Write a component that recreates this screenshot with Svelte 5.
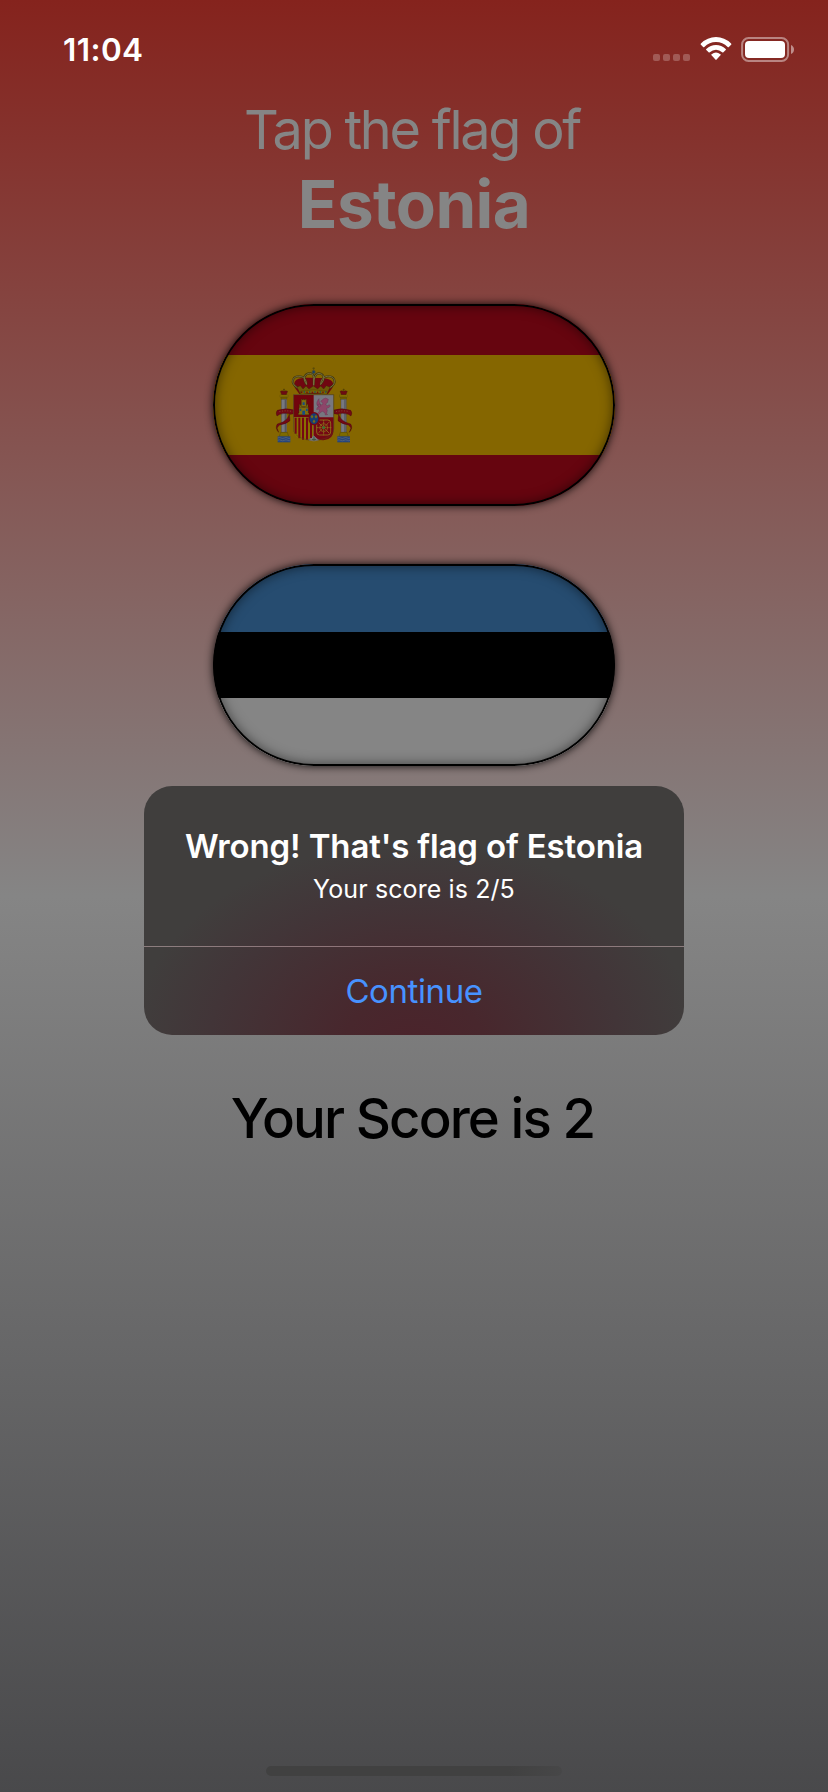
<script>
  const signal = [0, 1, 2, 3];
  const gems = [110, 118, 126, 134, 142, 150, 158, 166, 174, 182];
  const chains = [0, 45, 90, 135];
</script>

{#snippet pillar(x)}
  <g transform={`translate(${x} 0)`}>
    <path d="M-11 94 q5 -4 11 0 q6 -4 11 0 l-4 10 h-14z" fill="#6d0b12" stroke="#3b2b04" />
    <path d="M0 86v8M-3 89h6" stroke="#4b3b08" stroke-width="2" />
    <rect x="-12" y="105" width="24" height="6" fill="#8a7400" stroke="#40370a" stroke-width=".7" />
    <rect x="-9" y="111" width="18" height="7" fill="#6d5b00" stroke="#40370a" stroke-width=".7" />
    <rect x="-8" y="118" width="16" height="99" fill="#777880" stroke="#3f4148" />
    <path d="M4 118v99" stroke="#54565e" stroke-width="4" />
    <path d="M-10 217h20l4 12h-28z" fill="#7d6a00" stroke="#40370a" />
    <rect x="-19" y="229" width="38" height="18" fill="#27457a" />
    <path d="M-19 234q5 -3 10 0t10 0t10 0t8 0M-19 241q5 -3 10 0t10 0t10 0t8 0" fill="none" stroke="#71767b" stroke-width="1.5" />
  </g>
{/snippet}

{#snippet arms()}
  <svg class="arms" viewBox="0 0 300 270">
    {@render pillar(57)}
    {@render pillar(236)}
    <g fill="#730914" stroke="#35040a" stroke-width="1">
      <path d="M87 150q-25 -8 -50 1q-6 8 -1 17l8 -5q18 -6 32 0l11 -2z" />
      <path d="M73 163l2 19q-13 11 -32 13l-7 9l5 13q-12 -13 -4 -25q20 -4 31 -18z" />
      <path d="M207 150q25 -8 50 1q6 8 1 17l-8 -5q-18 -6 -32 0l-11 -2z" />
      <path d="M221 163l-2 19q13 11 32 13l7 9l-5 13q12 -13 4 -25q-20 -4 -31 -18z" />
    </g>
    <g fill="none" stroke="#8a6a3c" stroke-width="2" stroke-dasharray="3 5">
      <path d="M43 155q20 -5 40 0M213 155q20 -5 40 0" />
    </g>
    <path d="M90 84c-10 -28 14 -32 56 -30c44 -2 66 4 56 30l-13 18h-86z" fill="#700711" />
    <g fill="none" stroke="#40380c" stroke-width="6">
      <path d="M99 84C71 69 84 43 110 50q13 4 15 23M193 84c28 -15 15 -41 -11 -34q-13 4 -15 23" />
      <path d="M125 74c-15 -21 -4 -33 9 -34q12 0 12 12V76q0 -36 16 -36c15 2 21 16 4 34" />
    </g>
    <g fill="none" stroke="#7c7344" stroke-width="2.6">
      <path d="M99 84C71 69 84 43 110 50q13 4 15 23M193 84c28 -15 15 -41 -11 -34q-13 4 -15 23" />
      <path d="M125 74c-15 -21 -4 -33 9 -34q12 0 12 12V76q0 -36 16 -36c15 2 21 16 4 34" />
    </g>
    <path d="M96 82l10 -5 8 10 9 -9 9 9 13 -9 13 9 9 -9 9 9 8 -10 11 5 -9 20q-40 -8 -80 0z" fill="#6c5908" stroke="#302906" />
    <path d="M107 94q39 -9 79 0v9q-40 -7 -79 0z" fill="#796600" stroke="#382e06" />
    {#each gems as x, i}
      <circle cx={x} cy={97 - (i % 2)} r="2.4" fill={i % 2 ? '#144d70' : '#770713'} />
    {/each}
    <circle cx="146" cy="36" r="5" fill="#173f66" stroke="#5b5624" stroke-width="2" />
    <path d="M146 22v8M142 25h8" stroke="#51460c" stroke-width="2" />

    <path d="M86 104h120v103c0 45 -120 45 -120 0z" fill="#777780" stroke="#4d3c20" />
    <path d="M86 105h60v67H86z" fill="#71040d" />
    <path d="M86 172h60v54q-10 15 -29 15q-31 -3 -31 -34z" fill="#887000" />
    <path d="M92 173v48M103 173v62M114 173v66M126 173v66M138 173v61" stroke="#750713" stroke-width="6" />
    <path d="M146 172h60v35q0 32 -31 34q-19 0 -29 -15z" fill="#750713" />
    <g fill="none" stroke="#8c751a" stroke-width="2.6">
      <rect x="155" y="180" width="42" height="45" rx="9" />
      {#each chains as angle}
        <path d="M176 180v46" stroke-dasharray="4 1" transform={`rotate(${angle} 176 203)`} />
      {/each}
      <circle cx="176" cy="203" r="12" stroke-width="2" />
    </g>
    <circle cx="176" cy="203" r="4" fill="#397335" />
    <g fill="#7f6c10" stroke="#302b09">
      <path d="M103 133h3v3h3v-3h3v30h-9zM120 133h3v3h3v-3h3v30h-9z" />
      <path d="M109 117h3v3h3v-3h3v3h3v-3h3v23h-15z" />
      <path d="M102 142h28v17h2v5h-32v-5h2z" />
    </g>
    <path d="M113 127h6v8h-6zM104 146h5v7h-5zM123 146h5v7h-5zM112 152h8v12h-8z" fill="#164d83" />
    <path d="M175 117l7 -3 8 4 -2 9 -6 5 4 6 7 -4 3 4 -6 6 -6 1 3 6 -2 10 3 3 -7 1 -1 -6 -7 -5 -6 3 -6 7 -4 -3 7 -8 -3 -6 -6 2 1 -6 7 -3 -6 -5 6 -3 7 3 4 -5 -7 -6zM163 142c-12 -7 -8 -18 -1 -26c-1 10 5 14 5 24" fill="#8d4569" stroke="#5c2d48" />
    <ellipse cx="147" cy="176" rx="17" ry="20" fill="#730712" />
    <ellipse cx="147" cy="176" rx="13" ry="16" fill="#153d75" />
    <path d="M141 165l3 5-3 5-3-5zM153 165l3 5-3 5-3-5zM147 179l3 5-3 5-3-5zM137 171h8M149 171h8M143 185h8" fill="#84720f" stroke="#84720f" />
    <path d="M146 226q-7 14 -15 15q15 6 31 0q-9 -3 -16 -15z" fill="#808083" />
    <path d="M147 229v13M141 238h12" stroke="#345b49" stroke-width="3" />
    <path d="M86 104h120v103c0 45 -120 45 -120 0z" fill="none" stroke="#544014" stroke-width="1.5" />
  </svg>
{/snippet}

<main class="screen">
  <header class="status">
    <time>11:04</time>
    <div class="indicators">
      <div class="signal">{#each signal as dot (dot)}<i></i>{/each}</div>
      <svg class="wifi" width="32" height="24" viewBox="0 0 32 24" fill="#fff">
        <path d="M.9 7.5Q7.4 1 16 1t15.1 6.5q.7.7 0 1.3l-2.2 2.1q-.6.6-1.2 0Q22.7 5.9 16 5.9T4.3 10.9q-.6.6-1.2 0L.9 8.8q-.7-.6 0-1.3z" />
        <path d="M6.3 12.9Q10.5 9 16 9t9.7 3.9q.6.6 0 1.2l-2.3 2.2q-.6.6-1.2 0Q19.4 13.8 16 13.8t-6.2 2.5q-.6.6-1.2 0l-2.3-2.2q-.6-.6 0-1.2z" />
        <path d="M11.6 18.2Q16 14.9 20.4 18.2q.7.5.1 1.1L16.6 23.6q-.6.6-1.2 0L11.5 19.3q-.6-.6.1-1.1z" />
      </svg>
      <svg class="battery" width="54" height="26" viewBox="0 0 54 26">
        <rect x="1.1" y="1.1" width="46" height="22.8" rx="6.5" fill="none" stroke="#fff" stroke-opacity=".43" stroke-width="2" />
        <rect x="4" y="4" width="40" height="17" rx="4" fill="#fff" />
        <path d="M50 8q3 1.5 3 4.5t-3 4.5z" fill="#fff" fill-opacity=".48" />
      </svg>
    </div>
  </header>

  <section class="game">
    <h2>Tap the flag of</h2>
    <h1>Estonia</h1>
    <div class="flag spain"><span></span><span>{@render arms()}</span><span></span></div>
    <div class="flag estonia"><span></span><span></span><span></span></div>
    <div class="alert">
      <div class="copy">
        <strong>Wrong! That's flag of Estonia</strong>
        <p>Your score is 2/5</p>
      </div>
      <button>Continue</button>
    </div>
    <p class="score"><span>Your Score is 2</span></p>
  </section>
  <div class="home"></div>
</main>

<style>
  :global(body) { margin: 0; }
  * { box-sizing: border-box; }
  .screen {
    width: 828px; height: 1792px; display: flex; flex-direction: column; overflow: hidden;
    font-family: Inter, "Liberation Sans", sans-serif;
    background: linear-gradient(#85231d 0, #858585 50%, #49494b 100%);
  }
  .status { height: 100px; padding: 36px 33px 0 63px; display: flex; justify-content: space-between; align-items: flex-start; }
  time { color: #fff; font-size: 31.5px; line-height: 28px; font-weight: 600; letter-spacing: .4px; }
  .indicators { display: flex; align-items: flex-start; }
  .signal { display: flex; gap: 3px; padding-top: 18px; margin-right: 10px; }
  .signal i { width: 7px; height: 7px; border-radius: 2px; background: rgba(255,255,255,.23); }
  .wifi { margin-right: 9px; }
  .battery { margin-top: 1px; }
  .game { display: flex; flex-direction: column; align-items: center; }
  h1, h2, p { margin: 0; white-space: nowrap; }
  h2 { margin-top: 0; padding-right: 4px; color: #858585; font-weight: 400; font-size: 54px; line-height: 60px; letter-spacing: -2.25px; }
  h1 { color: #858585; font-size: 65.5px; font-weight: 700; line-height: 80px; margin-top: 5px; letter-spacing: -.6px; }
  .flag {
    position: relative; width: 402px; height: 202px; border-radius: 101px; overflow: hidden;
    display: grid; box-shadow: 0 0 8px rgba(0,0,0,.9);
  }
  .flag::after { content: ""; position: absolute; inset: 0; border: 2px solid #000; border-radius: 101px; box-shadow: inset 0 0 12px rgba(0,0,0,.5); }
  .spain { margin-top: 59px; grid-template-rows: 51px 100px 51px; background: #66050f; }
  .spain span:nth-child(2) { background: #856600; }
  .estonia { margin-top: 58px; grid-template-rows: 68px 66px 68px; }
  .estonia span:first-child { background: #264c70; }
  .estonia span:nth-child(2) { background: #000; }
  .estonia span:last-child { background: #858585; }
  .arms { display: block; width: 100px; height: 90px; margin: 5px 0 0 52px; }
  .alert {
    width: 540px; height: 249px; margin-top: 20px; border-radius: 28px; overflow: hidden;
    background: radial-gradient(ellipse 285px 205px at 50% 105%, #4b232b 0%, #48272d 25%, #423538 72%, #403e3d 100%);
  }
  .copy { height: 160px; padding-top: 39px; display: flex; flex-direction: column; align-items: center; color: #fff; }
  strong { font-size: 33px; font-weight: 600; line-height: 42px; letter-spacing: -.14px; white-space: nowrap; }
  .copy p { font-size: 25px; line-height: 32px; margin-top: 6px; letter-spacing: .1px; }
  button { display: block; width: 100%; height: 89px; padding: 0; border: 0; border-top: 1px solid rgba(255,220,225,.4); background: transparent; color: #4792ff; font: 400 33px/87px Inter, sans-serif; letter-spacing: -.4px; }
  .score { margin-top: 48px; padding-right: 3px; color: #000; font-size: 54.5px; font-weight: 500; line-height: 70px; letter-spacing: -1.9px; }
  .home { width: 296px; height: 10px; margin: auto auto 16px; border-radius: 5px; background: linear-gradient(90deg, #414141 82%, #474748); }
</style>
